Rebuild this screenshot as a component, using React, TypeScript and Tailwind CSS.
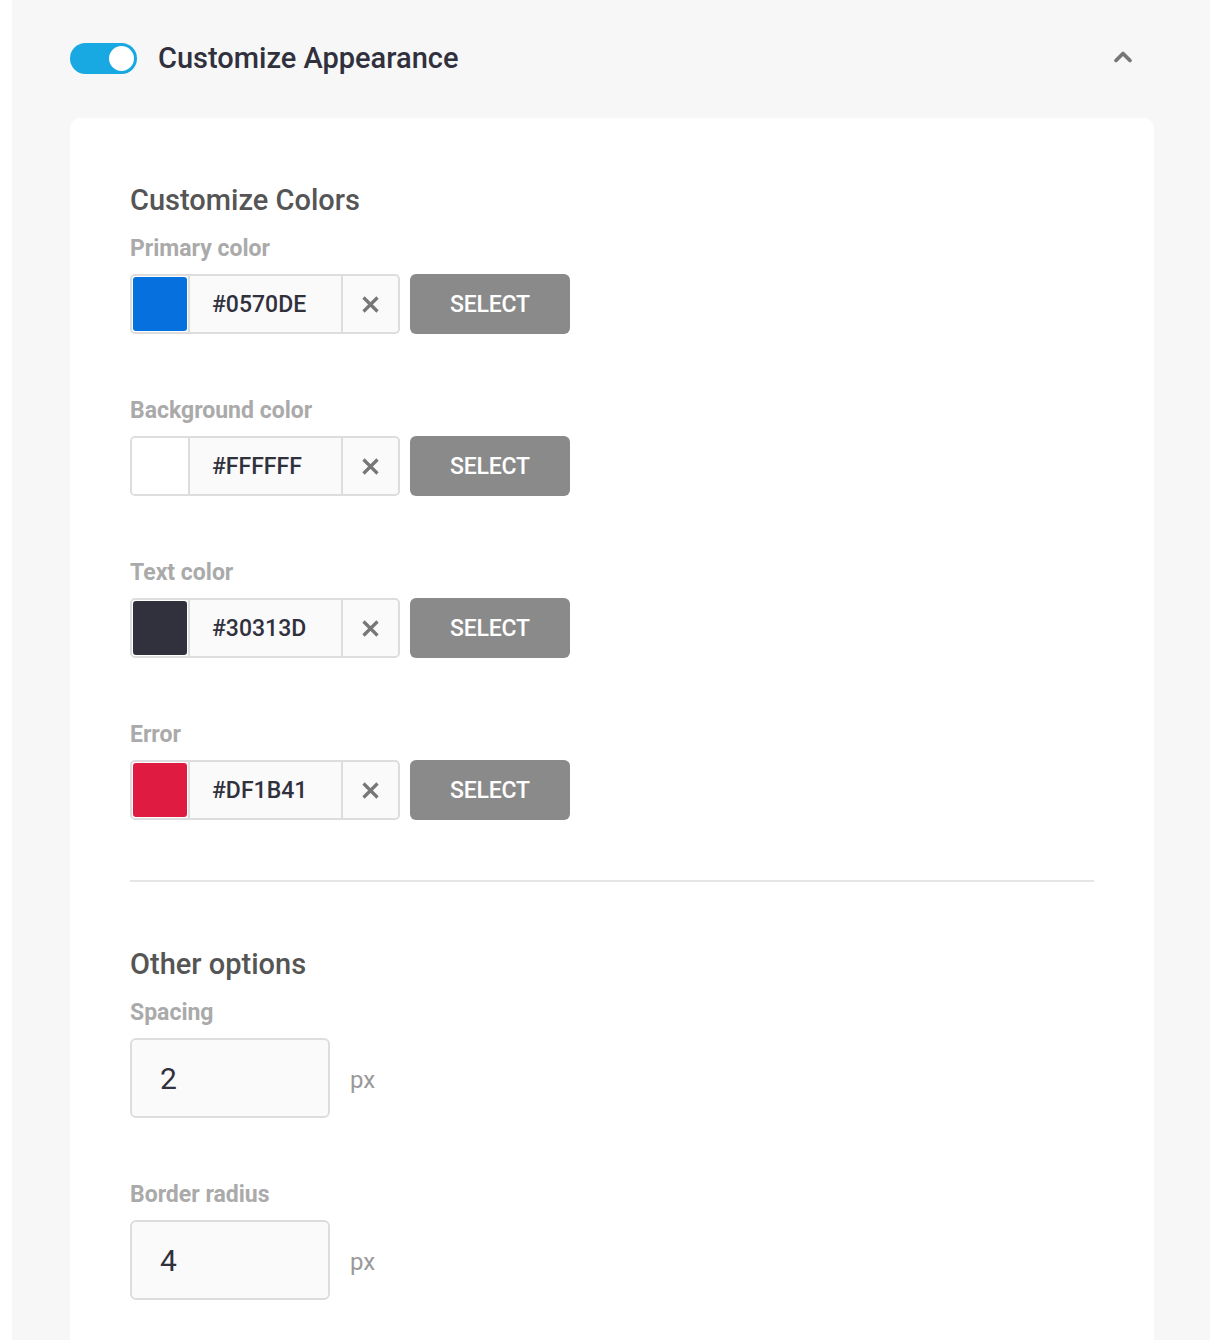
import { FiChevronUp } from "react-icons/fi";

const colors = [
  { label: "Primary color", value: "#0570DE", swatch: "bg-[#0570de]" },
  { label: "Background color", value: "#FFFFFF", swatch: "bg-white" },
  { label: "Text color", value: "#30313D", swatch: "bg-[#30313d]" },
  { label: "Error", value: "#DF1B41", swatch: "bg-[#df1b41]" },
];

const ColorRow = ({ label, value, swatch }: { label: string; value: string; swatch: string }) => (
  <div className="mb-[64px]">
    <div className="pt-[1px] text-[23px] leading-[24px] font-bold text-[#aaaaaa]">{label}</div>
    <div className="mt-[13px] flex gap-[10px]">
      <div className="flex h-[60px] w-[270px] rounded-[5px] border-2 border-[#dddddd] bg-[#fafafa] overflow-hidden">
        <div className="p-[1px] border-r-2 border-[#dddddd] bg-white">
          <div className={`h-[54px] w-[54px] rounded-[3px] ${swatch}`} />
        </div>
        <div className="flex flex-1 items-center pl-[22px] pt-[3px] text-[23px] font-medium text-[#30313d]">{value}</div>
        <div className="flex w-[57px] items-center justify-center border-l-2 border-[#dddddd]">
          <svg width="17" height="17" viewBox="0 0 17 17" fill="none" stroke="#777777" strokeWidth="3.2" strokeLinecap="butt">
            <path d="M1.5 1.5 L15.5 15.5 M15.5 1.5 L1.5 15.5" />
          </svg>
        </div>
      </div>
      <button className="h-[60px] w-[160px] rounded-[6px] bg-[#8a8a8a] pt-[3px] text-[23px] font-medium text-white tracking-[-0.2px]">
        SELECT
      </button>
    </div>
  </div>
);

const NumberRow = ({ label, value }: { label: string; value: string }) => (
  <div className="mb-[64px]">
    <div className="pt-[1px] text-[23px] leading-[24px] font-bold text-[#aaaaaa]">{label}</div>
    <div className="mt-[13px] flex items-center gap-[20px]">
      <div className="flex h-[80px] w-[200px] items-center rounded-[6px] border-2 border-[#dddddd] bg-[#fafafa] pl-[28px] text-[30px] text-[#30313d]">
        {value}
      </div>
      <span className="pt-[4px] text-[24px] text-[#999999]">px</span>
    </div>
  </div>
);

export default function App() {
  return (
    <div className="min-h-[1340px] w-[1220px] bg-white font-['Roboto',sans-serif]">
      <div className="ml-[12px] w-[1198px] min-h-[1340px] bg-[#f7f7f7]">
        <div className="flex h-[118px] items-start justify-between pl-[58px] pr-[73px] pt-[42px]">
          <div className="flex items-center gap-[21px]">
            <div className="flex h-[31px] w-[67px] items-center justify-end rounded-full bg-[#18a8e2] pr-[1px]">
              <div className="h-[29px] w-[29px] rounded-full border-2 border-[#18a8e2] bg-white" />
            </div>
            <span className="text-[29px] leading-[32px] font-medium text-[#30313d]">
              Customize Appearance
            </span>
          </div>
          <FiChevronUp className="mt-[1px] h-[28px] w-[28px] text-[#777777]" strokeWidth={3.2} />
        </div>
        <div className="ml-[58px] w-[1084px] min-h-[1222px] rounded-t-[10px] bg-white pl-[60px] pr-[60px] pt-[66px]">
          <div className="mb-[20px] text-[29px] leading-[32px] font-medium text-[#555555]">
            Customize Colors
          </div>
          {colors.map((c) => (
            <ColorRow key={c.label} {...c} />
          ))}
          <div className="-mt-[4px] h-[2px] bg-[#e6e6e6]" />
          <div className="mt-[66px] mb-[20px] text-[29px] leading-[32px] font-medium text-[#555555]">
            Other options
          </div>
          <NumberRow label="Spacing" value="2" />
          <NumberRow label="Border radius" value="4" />
        </div>
      </div>
    </div>
  );
}
